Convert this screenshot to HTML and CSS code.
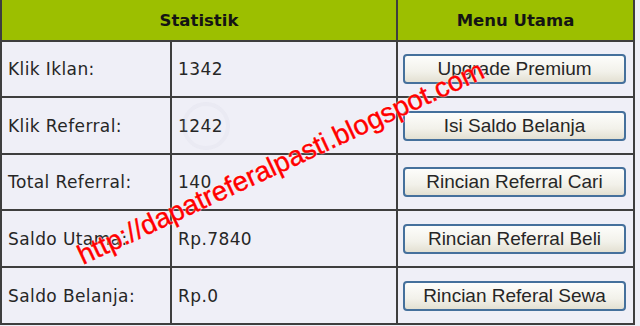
FILE: index.html
```html
<!DOCTYPE html>
<html>
<head>
<meta charset="utf-8">
<link rel="stylesheet" href="styles.css">
</head>
<body>
<div class="page">
  <div class="grid">
    <div class="head span2">Statistik</div>
    <div class="head">Menu Utama</div>

    <div class="cell">Klik Iklan:</div>
    <div class="cell">1342</div>
    <div class="cell btncell"><button class="btn">Upgrade Premium</button></div>

    <div class="cell">Klik Referral:</div>
    <div class="cell">1242</div>
    <div class="cell btncell"><button class="btn">Isi Saldo Belanja</button></div>

    <div class="cell">Total Referral:</div>
    <div class="cell">140</div>
    <div class="cell btncell"><button class="btn">Rincian Referral Cari</button></div>

    <div class="cell">Saldo Utama:</div>
    <div class="cell">Rp.7840</div>
    <div class="cell btncell"><button class="btn">Rincian Referral Beli</button></div>

    <div class="cell">Saldo Belanja:</div>
    <div class="cell">Rp.0</div>
    <div class="cell btncell"><button class="btn">Rincian Referal Sewa</button></div>
  </div>
  <div class="stamp"></div>
  <div class="watermark">http://dapatreferalpasti.blogspot.com</div>
</div>
</body>
</html>
```

FILE: styles.css
```css
html, body {
  margin: 0;
  padding: 0;
  background: #efeff7;
  overflow: hidden;
}
.page {
  position: relative;
  width: 640px;
  height: 326px;
  overflow: hidden;
}
.grid {
  display: grid;
  width: 631px;
  grid-template-columns: 168px 224px 235px;
  grid-template-rows: 40px 54px 55px 54px 55px 55px;
  gap: 2px;
  padding: 0 2px 2px 2px;
  background: #3e3e3e;
}
.head {
  background: #9cbf00;
  display: flex;
  align-items: center;
  justify-content: center;
  font-family: "DejaVu Sans", Verdana, sans-serif;
  font-weight: bold;
  font-size: 16.5px;
  color: #141414;
}
.span2 {
  grid-column: span 2;
}
.cell {
  background: #efeff7;
  display: flex;
  align-items: center;
  padding-left: 6px;
  font-family: "DejaVu Sans", Verdana, sans-serif;
  font-size: 17px;
  letter-spacing: 0.4px;
  color: #262626;
}
.btncell {
  padding-left: 5px;
}
.btn {
  width: 223px;
  height: 30px;
  margin: 0;
  padding: 0;
  border: 2px solid #45709c;
  border-radius: 4px;
  background: linear-gradient(#fdfdfb, #f2f1ea 60%, #e3e0d2);
  font-family: "Liberation Sans", Arial, sans-serif;
  font-size: 19px;
  color: #262626;
}
.stamp {
  position: absolute;
  left: 182px;
  top: 102px;
  width: 48px;
  height: 48px;
  border-radius: 50%;
  border: 4px solid rgba(200, 200, 215, 0.12);
  box-sizing: border-box;
}
.watermark {
  position: absolute;
  left: 83px;
  top: 243px;
  font-family: "Liberation Sans", Arial, sans-serif;
  font-size: 27.5px;
  line-height: 26px;
  color: #ff0000;
  white-space: nowrap;
  transform-origin: 0 22px;
  transform: rotate(-25deg);
  -webkit-text-stroke: 0.4px #ff0000;
  text-shadow: 0 0 2px #ffffff, 0 0 1px #ffffff;
}
```
